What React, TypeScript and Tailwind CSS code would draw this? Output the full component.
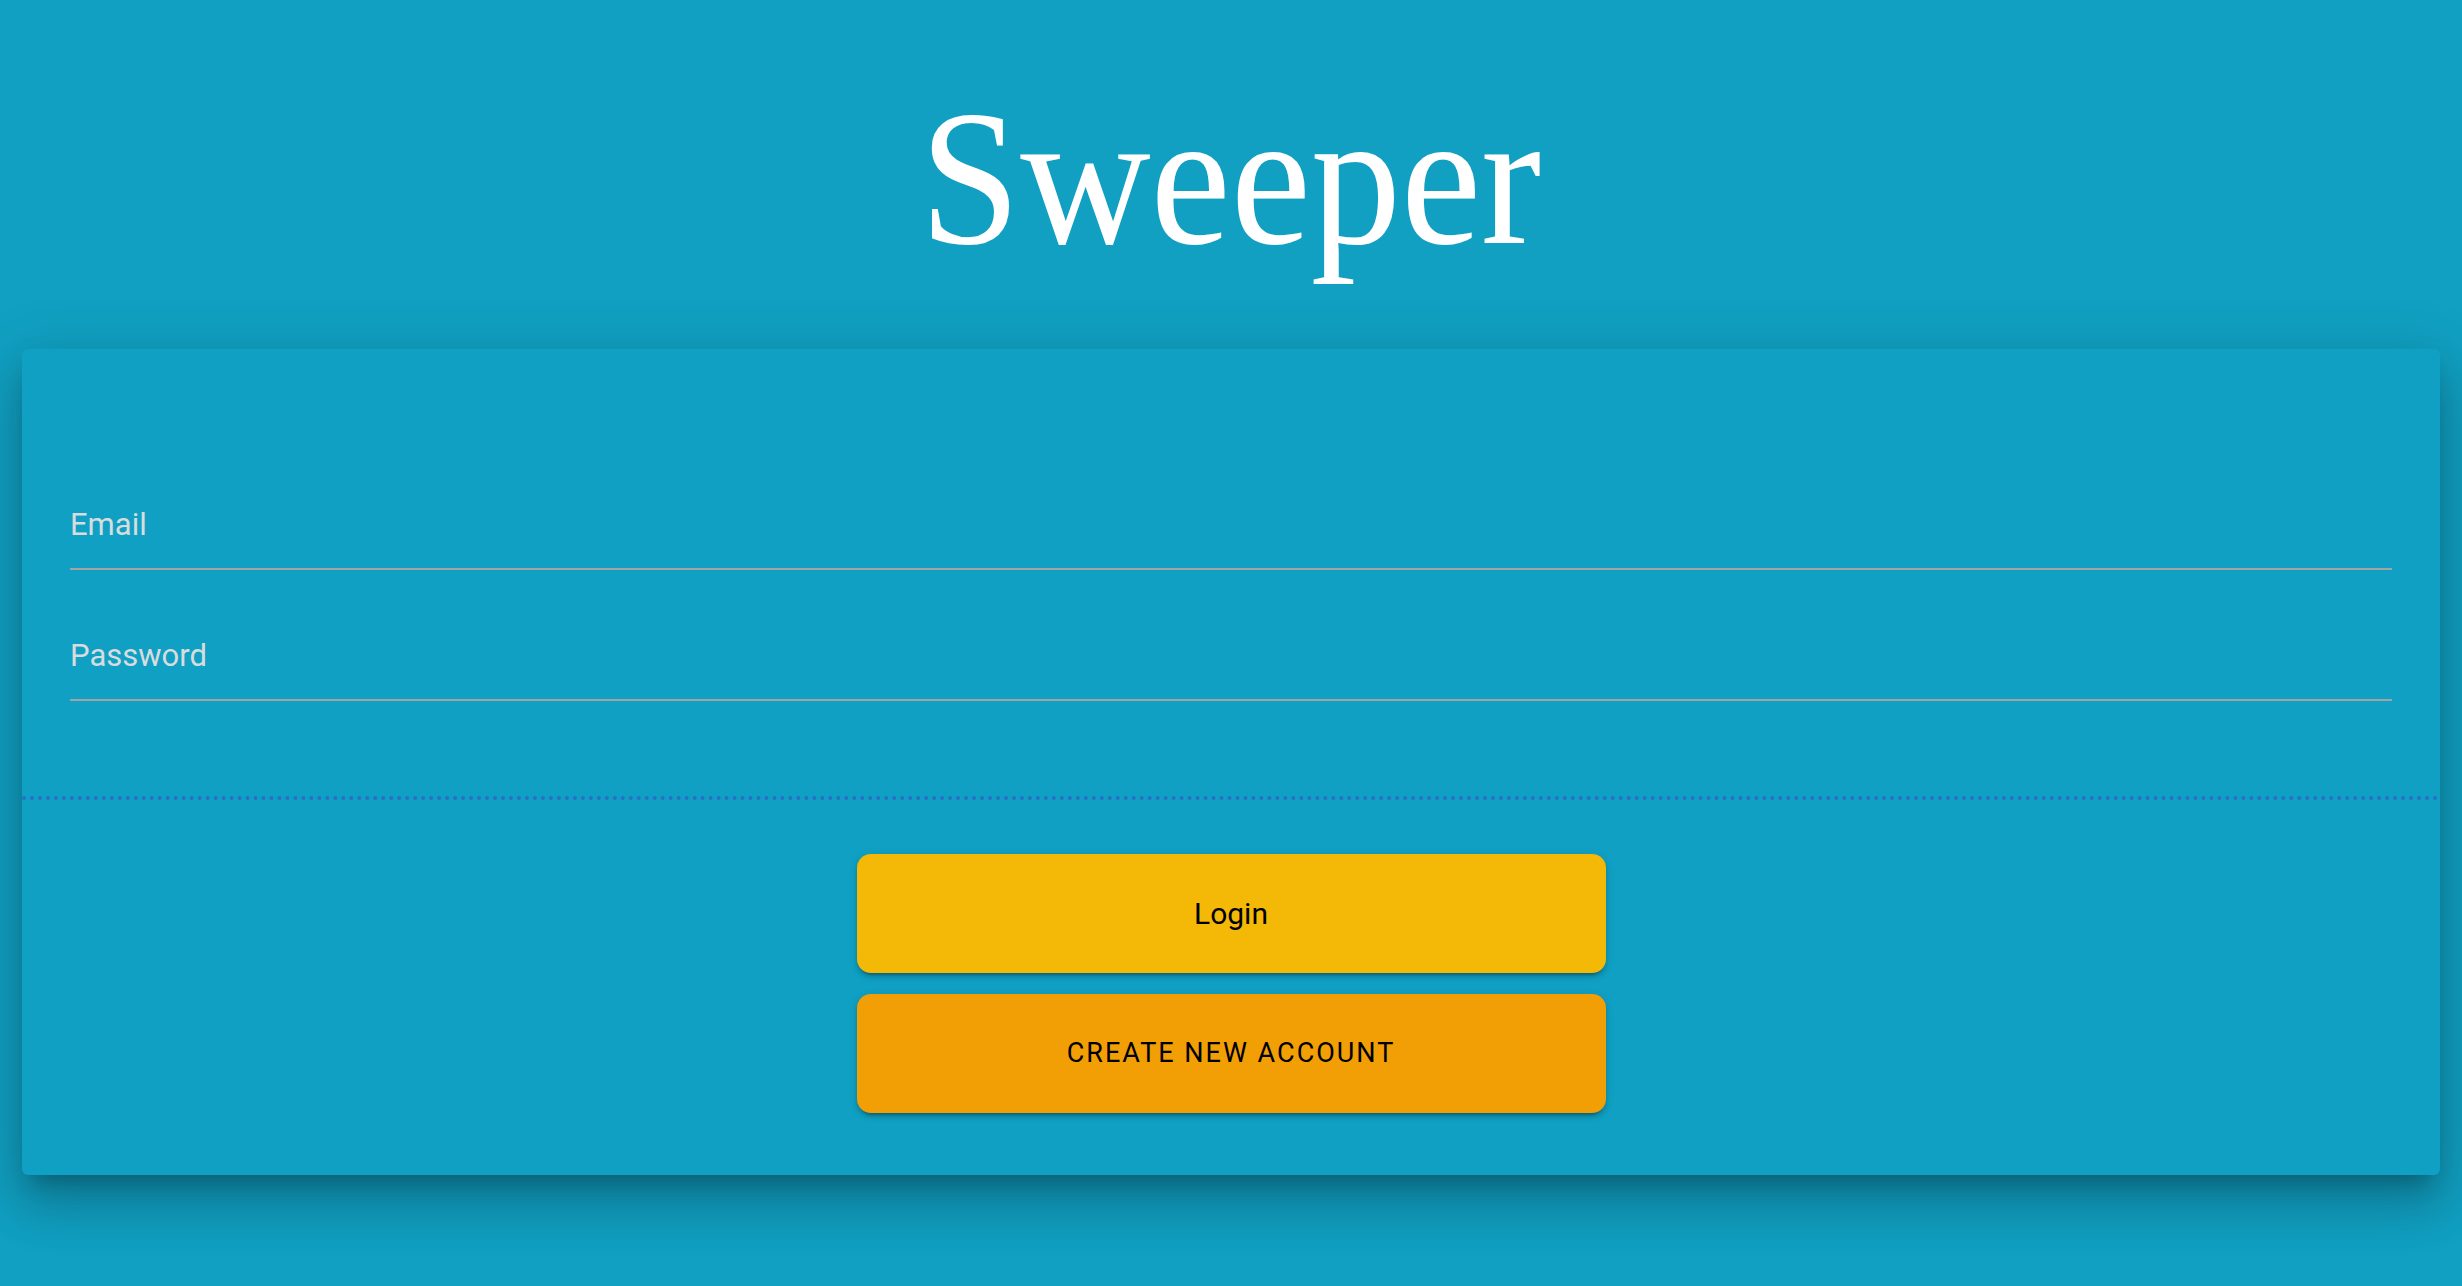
import React from 'react';

const fieldLabel = "block text-[31px] leading-none text-[#d8dcde] font-['Roboto',sans-serif]";

const Field: React.FC<{ label: string; first?: boolean }> = ({ label, first }) => (
    <div className={first ? '' : 'mt-[70px]'}>
        <label className={fieldLabel}>{label}</label>
        <div className="mt-[28px] h-[2px] bg-[#a3a3a3]" />
    </div>
);

export default function App() {
    return (
        <div className="min-h-screen bg-[#11a0c2] font-['Roboto',sans-serif]">
            <header className="h-[349px] pt-[83px] flex justify-center">
                <h1 className="text-[192px] leading-none text-white font-['Liberation_Serif','Times_New_Roman',serif] scale-x-[0.94]">
                    Sweeper
                </h1>
            </header>

            <main className="mx-[22px] rounded-[6px] bg-[#10a0c3] shadow-[0_16px_20px_-10px_rgba(0,0,0,0.25),0_32px_48px_4px_rgba(0,0,0,0.14),0_12px_60px_10px_rgba(0,0,0,0.12)]">
                <div className="px-[48px] pt-[160px] pb-[95px] border-b-4 border-dotted border-[#2a6fc6]">
                    <Field label="Email" first />
                    <Field label="Password" />
                </div>

                <div className="flex flex-col items-center gap-[21px] pt-[54px] pb-[62px]">
                    <button className="w-[749px] h-[119px] rounded-[14px] bg-[#f4b807] text-black text-[30px] shadow-[0_6px_2px_-4px_rgba(0,0,0,0.2),0_4px_4px_0_rgba(0,0,0,0.14),0_2px_10px_0_rgba(0,0,0,0.12)]">
                        Login
                    </button>
                    <button className="w-[749px] h-[119px] rounded-[14px] bg-[#f29e05] text-black text-[27px] uppercase tracking-[2px] shadow-[0_6px_2px_-4px_rgba(0,0,0,0.2),0_4px_4px_0_rgba(0,0,0,0.14),0_2px_10px_0_rgba(0,0,0,0.12)]">
                        Create new account
                    </button>
                </div>
            </main>
        </div>
    );
}
